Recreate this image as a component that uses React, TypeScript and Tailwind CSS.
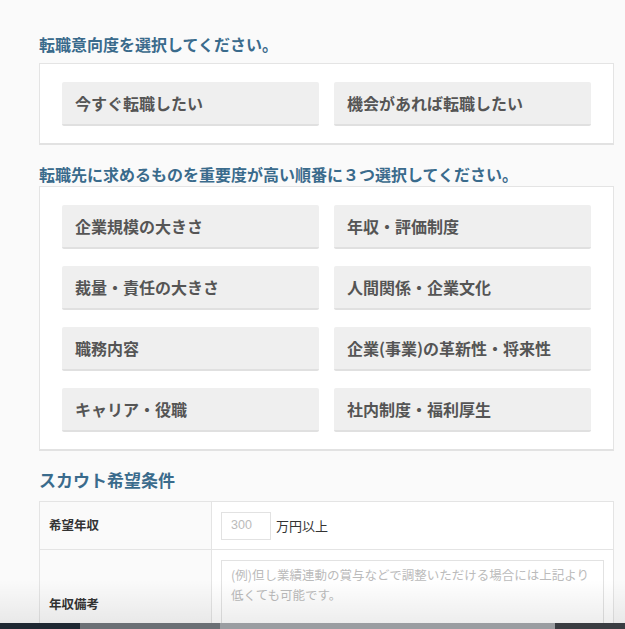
import React from "react";

const font = { fontFamily: '"Noto Sans CJK JP", "Noto Sans", sans-serif' };

function Btn({ label }: { label: string }) {
  return (
    <div className="h-[44px] bg-[#efefef] border-b-2 border-[#e0e0e0] rounded-[2px] flex items-center pl-[13px] text-[16px] font-bold text-[#555]">
      {label}
    </div>
  );
}

export default function App() {
  const opts = [
    "企業規模の大きさ",
    "年収・評価制度",
    "裁量・責任の大きさ",
    "人間関係・企業文化",
    "職務内容",
    "企業(事業)の革新性・将来性",
    "キャリア・役職",
    "社内制度・福利厚生",
  ];
  return (
    <div className="relative w-[625px] h-[629px] overflow-hidden bg-[#fafafa]" style={font}>
      <div className="pl-[39px] pt-[32px] w-[614px]">
        <h2 className="text-[16px] leading-[24px] font-bold text-[#3a6b8c] mb-[7px]">
          転職意向度を選択してください。
        </h2>
        <div className="bg-white border border-[#e4e4e4] border-b-2 border-b-[#e2e2e2] px-[22px] pt-[18px] pb-[17px]">
          <div className="grid grid-cols-2 gap-x-[15px]">
            <Btn label="今すぐ転職したい" />
            <Btn label="機会があれば転職したい" />
          </div>
        </div>
        <h2 className="mt-[17px] text-[16px] leading-[24px] font-bold text-[#3a6b8c]">
          転職先に求めるものを重要度が高い順番に３つ選択してください。
        </h2>
        <div className="bg-white border border-[#e4e4e4] border-b-2 border-b-[#e2e2e2] px-[22px] pt-[18px] pb-[17px]">
          <div className="grid grid-cols-2 gap-x-[15px] gap-y-[17px]">
            {opts.map((o) => (
              <Btn key={o} label={o} />
            ))}
          </div>
        </div>
        <h2 className="mt-[17px] mb-[9px] text-[17px] leading-[24px] font-bold text-[#3a6b8c]">
          スカウト希望条件
        </h2>
        <div className="border border-[#e4e4e4] bg-white">
          <div className="flex h-[48px] border-b border-[#e4e4e4]">
            <div className="w-[172px] shrink-0 bg-[#fafafa] border-r border-[#e4e4e4] flex items-center pl-[9px] text-[12.5px] font-bold text-[#333]">
              希望年収
            </div>
            <div className="flex items-center pl-[9px] gap-[5px]">
              <div className="w-[50px] h-[28px] border border-[#e2e2e2] bg-white flex items-center pl-[9px] text-[12.5px] text-[#bbb]" style={{ fontFamily: '"Liberation Sans", "Noto Sans CJK JP", sans-serif' }}>
                300
              </div>
              <span className="text-[13px] text-[#333]">万円以上</span>
            </div>
          </div>
          <div className="flex h-[108px]">
            <div className="w-[172px] shrink-0 bg-[#fafafa] border-r border-[#e4e4e4] flex items-center pl-[9px] text-[12.5px] font-bold text-[#333]">
              年収備考
            </div>
            <div className="flex-1 pl-[9px] pr-[9px] pt-[10px]">
              <div className="h-[88px] border border-[#e2e2e2] bg-white px-[9px] pt-[4px] text-[12.5px] leading-[20px] text-[#bbb]">
                (例)但し業績連動の賞与などで調整いただける場合には上記より低くても可能です。
              </div>
            </div>
          </div>
        </div>
      </div>
      <div className="absolute left-0 right-0 top-[580px] h-[43px] bg-gradient-to-b from-transparent to-black/[0.07] pointer-events-none" />
      <div className="absolute left-0 right-0 top-[623px] h-[6px] flex">
        <div className="w-[80px] bg-[#1f2832]" />
        <div className="w-[140px] bg-[#6b7075]" />
        <div className="flex-1 bg-[#9a9da1]" />
        <div className="w-[70px] bg-[#3a3d42]" />
      </div>
    </div>
  );
}
